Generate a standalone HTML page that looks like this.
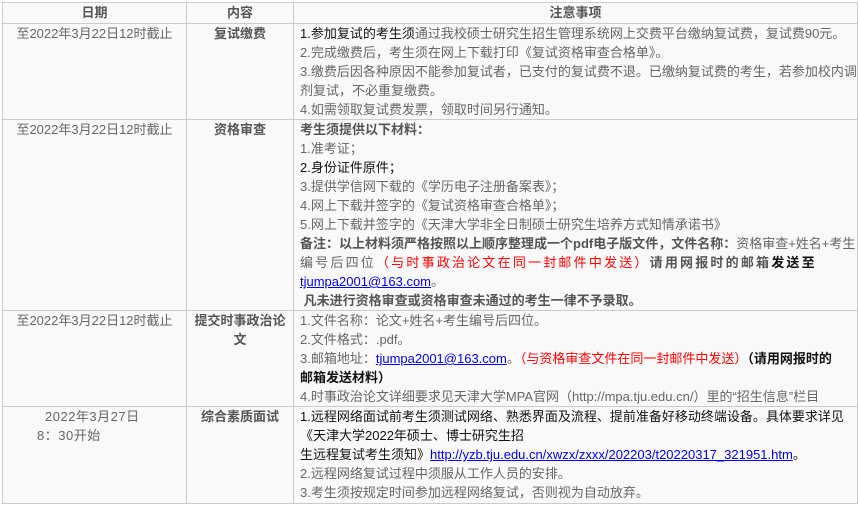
<!DOCTYPE html>
<html><head><meta charset="utf-8"><style>
body{margin:0;background:#fff;width:859px;height:506px;overflow:hidden;font-family:"Liberation Sans","Noto Sans CJK SC",sans-serif;font-size:13px;color:#666}
table{position:absolute;left:2px;top:2px;border-collapse:collapse;background:#f9f9f9;table-layout:fixed}
td,th{border:1px solid #ccc;vertical-align:top;padding:0;line-height:19px}
th{height:20px;font-weight:bold;color:#555;text-align:center}
.d{text-align:center}
.c{text-align:center;font-weight:bold;color:#555}
.n{padding-left:6px;white-space:nowrap}
.n div{height:19px}
b{color:#111}
.g{font-weight:bold;color:#555}
.r{color:#f00}
a{color:#00e;text-decoration:underline}
</style></head><body>
<table>
<colgroup><col style="width:184px"><col style="width:107px"><col style="width:564px"></colgroup>
<tr><th>日期</th><th>内容</th><th>注意事项</th></tr>
<tr style="height:95px"><td class="d">至2022年3月22日12时截止</td><td class="c">复试缴费</td><td class="n">
<div><span style="color:#111">1.参加复试的考生须</span>通过我校硕士研究生招生管理系统网上交费平台缴纳复试费，复试费90元。</div>
<div>2.完成缴费后，考生须在网上下载打印《复试资格审查合格单》。</div>
<div>3.缴费后因各种原因不能参加复试者，已支付的复试费不退。已缴纳复试费的考生，若参加校内调</div>
<div>剂复试，不必重复缴费。</div>
<div>4.如需领取复试费发票，领取时间另行通知。</div></td></tr>
<tr style="height:191px"><td class="d">至2022年3月22日12时截止</td><td class="c">资格审查</td><td class="n">
<div class="g">考生须提供以下材料：</div>
<div>1.准考证；</div>
<div style="color:#111">2.身份证件原件；</div>
<div>3.提供学信网下载的《学历电子注册备案表》；</div>
<div>4.网上下载并签字的《复试资格审查合格单》；</div>
<div>5.网上下载并签字的《天津大学非全日制硕士研究生培养方式知情承诺书》</div>
<div><span class="g">备注：以上材料须严格按照以上顺序整理成一个pdf电子版文件，文件名称：</span>资格审查+姓名+考生</div>
<div style="letter-spacing:2.2px">编号后四位<span class="r">（与时事政治论文在同一封邮件中发送）</span><span class="g">请用网报时的邮箱</span><b>发送至</b></div>
<div><a>tjumpa2001@163.com</a>。</div>
<div class="g">&nbsp;凡未进行资格审查或资格审查未通过的考生一律不予录取。</div></td></tr>
<tr style="height:95px"><td class="d">至2022年3月22日12时截止</td><td class="c">提交时事政治论<br>文</td><td class="n">
<div>1.文件名称：论文+姓名+考生编号后四位。</div>
<div>2.文件格式：.pdf。</div>
<div>3.邮箱地址：<a>tjumpa2001@163.com</a>。<span class="r">（与资格审查文件在同一封邮件中发送）</span><b>（请用网报时的</b></div>
<div><b>邮箱发送材料）</b></div>
<div>4.时事政治论文详细要求见天津大学MPA官网（http://mpa.tju.edu.cn/）里的“招生信息”栏目</div></td></tr>
<tr style="height:97px"><td><div style="padding-left:42px;letter-spacing:0.5px">2022年3月27日</div><div style="padding-left:34px;letter-spacing:0.5px">8：30开始</div></td><td class="c">综合素质面试</td><td class="n">
<div style="color:#111">1.远程网络面试前考生须测试网络、熟悉界面及流程、提前准备好移动终端设备。具体要求详见</div>
<div style="color:#111">《天津大学2022年硕士、博士研究生招</div>
<div style="color:#111">生远程复试考生须知》<a>http://yzb.tju.edu.cn/xwzx/zxxx/202203/t20220317_321951.htm</a>。</div>
<div>2.远程网络复试过程中须服从工作人员的安排。</div>
<div>3.考生须按规定时间参加远程网络复试，否则视为自动放弃。</div></td></tr>
</table>
</body></html>
